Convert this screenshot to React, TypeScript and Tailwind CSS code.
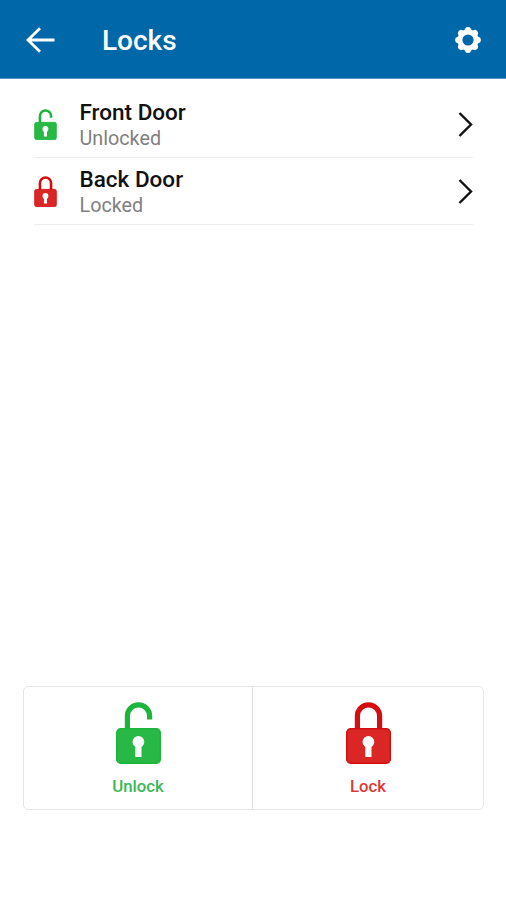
import clsx from 'clsx';

interface Door {
  name: string;
  locked: boolean;
}

const doors: Door[] = [
  { name: 'Front Door', locked: false },
  { name: 'Back Door', locked: true },
];

const GEAR_ANGLES = [0, 45, 90, 135, 180, 225, 270, 315];

function LockIcon({ locked, className }: { locked: boolean; className?: string }) {
  return (
    <svg
      viewBox="0 0 45 62"
      fill="none"
      className={clsx(locked ? 'text-[#da2625]' : 'text-[#27b846]', className)}
    >
      {/* Shackle */}
      <path
        d={locked ? 'M11.4 28V14a11.1 11.1 0 0 1 22.2 0V28' : 'M11.4 28V14a11.1 11.1 0 0 1 22.2 0V17.5'}
        stroke={locked ? '#d40d10' : '#1bb53b'}
        strokeWidth="5.2"
      />
      {/* Body */}
      <rect
        x="0.7"
        y="26.7"
        width="43.6"
        height="34.6"
        rx="4"
        fill="currentColor"
        stroke={locked ? '#d40d10' : '#1bb53b'}
        strokeWidth="1.4"
      />
      {/* Keyhole */}
      <circle cx="22.4" cy="39.8" r="5.9" fill="#fff" />
      <path d="M19.3 42h6.2v13h-6.2z" fill="#fff" />
    </svg>
  );
}

function GearIcon() {
  return (
    <svg viewBox="-13 -13 26 26" className="size-[26px]">
      {GEAR_ANGLES.map((angle) => (
        <path
          key={angle}
          d="M-4.6 -8L-2.6 -11.7Q-1.8 -12.9 0 -12.9Q1.8 -12.9 2.6 -11.7L4.6 -8Z"
          transform={`rotate(${angle})`}
          fill="#fff"
        />
      ))}
      <circle r="8" fill="none" stroke="#fff" strokeWidth="4.8" />
    </svg>
  );
}

function Header() {
  return (
    <header className="flex h-[79px] items-center border-b border-[#5d91c4] bg-[#0067a8] pr-[25px] pl-[26px] text-white">
      <svg viewBox="0 0 29 26" fill="none" stroke="currentColor" strokeWidth="2.8" className="mt-[2px] h-[26px] w-[29px]">
        <path d="M28.5 13H2M14 1.2L2 13L14 24.8" />
      </svg>
      <h1 className="mt-[3px] ml-[47px] text-[28px] leading-8 font-medium">Locks</h1>
      <button className="mt-[2px] ml-auto">
        <GearIcon />
      </button>
    </header>
  );
}

function DoorRow({ door }: { door: Door }) {
  return (
    <li className="flex h-[67px] items-center border-b border-[#ececec]">
      <LockIcon locked={door.locked} className="h-[31px] w-[23px]" />
      <div className="mt-[5px] ml-[22.5px]">
        <p className="text-[22.5px] leading-[25px] font-medium text-[#111]">{door.name}</p>
        <p className="text-[19.75px] leading-[28px] text-[#808080]">{door.locked ? 'Locked' : 'Unlocked'}</p>
      </div>
      <svg viewBox="0 0 15 26" fill="none" stroke="#111" strokeWidth="2.4" className="mt-px ml-auto h-[26px] w-[15px]">
        <path d="M1.5 1L13 12.5L1.5 24" />
      </svg>
    </li>
  );
}

export default function App() {
  return (
    <div className="flex h-screen flex-col bg-white font-[Roboto,sans-serif]">
      <Header />

      <ul className="mt-3 mr-[33px] ml-[34px]">
        {doors.map((door) => (
          <DoorRow key={door.name} door={door} />
        ))}
      </ul>

      {/* Actions */}
      <div className="mt-auto mr-[22px] mb-[90px] ml-[23px] grid h-[124px] grid-cols-[229px_1fr] rounded-[5px] border-[1.5px] border-[#e4e7e9]">
        <button className="flex flex-col items-center border-r border-[#e0e3e5] pt-[15px]">
          <LockIcon locked={false} className="h-[62px] w-[45px]" />
          <span className="mt-[11px] text-[16.75px] leading-[22px] font-medium text-[#3cb855]">Unlock</span>
        </button>
        <button className="flex flex-col items-center pt-[15px]">
          <LockIcon locked className="h-[62px] w-[45px]" />
          <span className="mt-[11px] text-[16.75px] leading-[22px] font-medium text-[#dc3a38]">Lock</span>
        </button>
      </div>
    </div>
  );
}
